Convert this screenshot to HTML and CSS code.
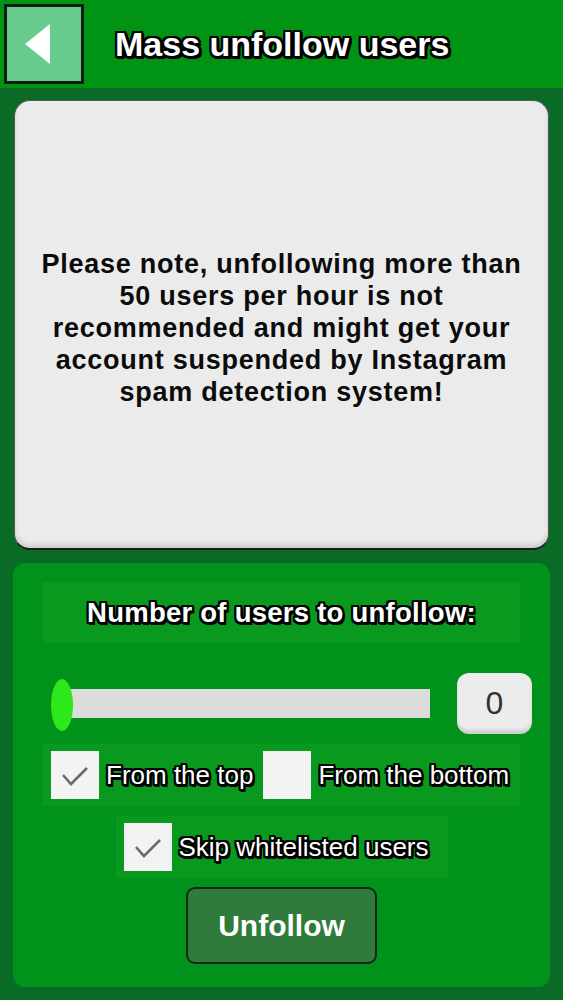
FILE: index.html
```html
<!DOCTYPE html>
<html>
<head>
<meta charset="utf-8">
<link rel="stylesheet" href="styles.css">
</head>
<body>
<div class="app">
  <header class="topbar">
    <div class="back">
      <svg width="26" height="40" viewBox="0 0 26 40"><polygon points="25,0 25,40 0,20" fill="#fff"/></svg>
    </div>
    <h1 class="title">Mass unfollow users</h1>
  </header>
  <main class="content">
    <section class="notice">
      <p>Please note, unfollowing more than 50 users per hour is not recommended and might get your account suspended by Instagram spam detection system!</p>
    </section>
    <section class="panel">
      <div class="label-box"><span class="outlined">Number of users to unfollow:</span></div>
      <div class="slider-row">
        <div class="slider">
          <div class="track"></div>
          <div class="thumb"></div>
        </div>
        <div class="value">0</div>
      </div>
      <div class="opt-row">
        <div class="check checked"><svg width="30" height="22" viewBox="0 0 30 22"><polyline points="3,10 11,19 27,3" fill="none" stroke="#6b6b6b" stroke-width="2.6"/></svg></div>
        <span class="outlined opt">From the top</span>
        <div class="check"></div>
        <span class="outlined opt">From the bottom</span>
      </div>
      <div class="opt-row skip">
        <div class="check checked"><svg width="30" height="22" viewBox="0 0 30 22"><polyline points="3,10 11,19 27,3" fill="none" stroke="#6b6b6b" stroke-width="2.6"/></svg></div>
        <span class="outlined opt">Skip whitelisted users</span>
      </div>
      <button class="unfollow">Unfollow</button>
    </section>
  </main>
</div>
</body>
</html>
```
FILE: styles.css
```css
html, body {
  margin: 0;
  padding: 0;
}
body {
  background: #0a6b27;
  font-family: "Liberation Sans", Arial, sans-serif;
  width: 563px;
  height: 1000px;
  overflow: hidden;
}
.app {
  display: flex;
  flex-direction: column;
}
.topbar {
  height: 88px;
  background: #009314;
  display: flex;
  align-items: flex-start;
  box-sizing: border-box;
  padding: 4px 0 0 4px;
}
.back {
  width: 80px;
  height: 80px;
  box-sizing: border-box;
  border: 3px solid #0d1a10;
  background: #66cb8c;
  display: flex;
  align-items: center;
  justify-content: center;
  padding-right: 12px;
}
.title {
  margin: 0 0 0 31px;
  height: 80px;
  display: flex;
  align-items: center;
  font-size: 34px;
  font-weight: bold;
  color: #fff;
  text-shadow: -2px -2px 0 #000, 2px -2px 0 #000, -2px 2px 0 #000, 2px 2px 0 #000, 0 -2px 0 #000, 0 3px 0 #000, -2px 0 0 #000, 3px 0 0 #000, 3px 3px 0 #000;
}
.content {
  display: flex;
  flex-direction: column;
  padding: 12px 13px 0 14px;
  gap: 13px;
}
.notice {
  height: 450px;
  box-sizing: border-box;
  background: #ebebeb;
  border-radius: 16px;
  border: 1px solid #555;
  border-bottom: 2px solid #1a1a1a;
  box-shadow: inset 0 -4px 4px rgba(0,0,0,0.12);
  display: flex;
  align-items: center;
  justify-content: center;
  margin-right: 1px;
}
.notice p {
  margin: 0;
  max-width: 490px;
  padding-top: 6px;
  text-align: center;
  font-weight: bold;
  font-size: 27px;
  line-height: 32px;
  letter-spacing: 0.75px;
  color: #0b0b0b;
}
.panel {
  height: 424px;
  box-sizing: border-box;
  background: #00921a;
  border-radius: 12px;
  margin-left: -1px;
  padding: 19px 30px 0 30px;
  display: flex;
  flex-direction: column;
  align-items: center;
}
.outlined {
  color: #fff;
  text-shadow: -2px -2px 0 #000, 2px -2px 0 #000, -2px 2px 0 #000, 2px 2px 0 #000, 0 -2px 0 #000, 0 2.5px 0 #000, -2px 0 0 #000, 2.5px 0 0 #000, 2.5px 2.5px 0 #000;
}
.label-box {
  align-self: stretch;
  height: 61px;
  background: #08991e;
  display: flex;
  align-items: center;
  justify-content: center;
  font-weight: bold;
  font-size: 27.5px;
  letter-spacing: 0.25px;
}
.slider-row {
  align-self: stretch;
  display: flex;
  align-items: center;
  margin-top: 30px;
  height: 61px;
  padding-left: 8px;
}
.slider {
  position: relative;
  width: 380px;
  height: 56px;
  display: flex;
  align-items: center;
}
.track {
  margin-left: 12px;
  width: 367px;
  height: 29px;
  background: #dcdcdc;
}
.thumb {
  position: absolute;
  left: 0;
  top: 3px;
  width: 22px;
  height: 52px;
  border-radius: 50%;
  background: #2de81a;
}
.value {
  margin-left: auto;
  margin-right: -12px;
  width: 75px;
  height: 61px;
  box-sizing: border-box;
  background: #ececec;
  border-radius: 12px;
  box-shadow: inset 0 -4px 3px rgba(0,0,0,0.12);
  display: flex;
  align-items: center;
  justify-content: center;
  font-size: 32px;
  color: #333;
}
.opt-row {
  align-self: stretch;
  margin-top: 10px;
  height: 62px;
  background: #08991e;
  display: flex;
  align-items: center;
  padding-left: 8px;
  font-size: 26px;
  letter-spacing: 0;
}
.opt-row.skip {
  align-self: center;
  width: 332px;
  box-sizing: border-box;
  margin-top: 10px;
}
.check {
  width: 48px;
  height: 48px;
  background: #f3f3f3;
  display: flex;
  align-items: center;
  justify-content: center;
  flex: none;
}
.check svg {
  margin-top: 2px;
}
.opt {
  margin-left: 7px;
  margin-right: 10px;
}
.unfollow {
  margin-top: 9px;
  width: 191px;
  height: 77px;
  background: #307a3b;
  border: 2px solid #102a14;
  border-radius: 9px;
  color: #fff;
  font-family: "Liberation Sans", Arial, sans-serif;
  font-weight: bold;
  font-size: 30px;
  padding: 0;
}
```
